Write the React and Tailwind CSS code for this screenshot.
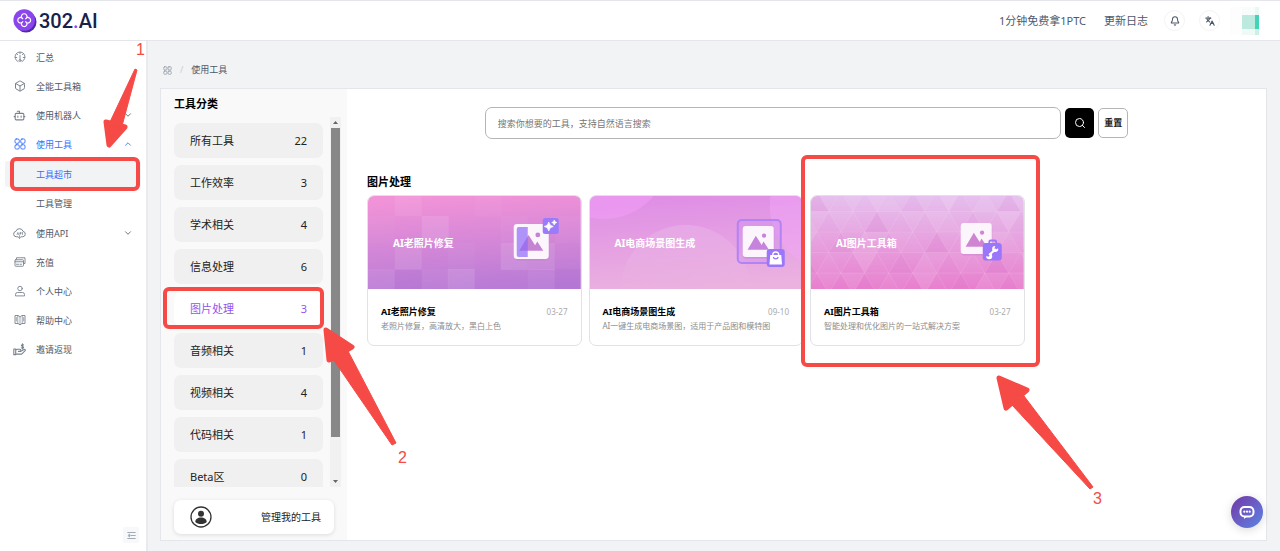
import React, { useState } from "react";
import { Bell, Bot, Box, ChevronDown, ChevronUp, Languages, Search } from "lucide-react";

const Svg = ({ className = "size-3", children }) => (
  <svg
    className={className}
    viewBox="0 0 24 24"
    fill="none"
    stroke="currentColor"
    strokeWidth="1.8"
    strokeLinecap="round"
    strokeLinejoin="round"
    aria-hidden="true"
  >
    {children}
  </svg>
);

const AppsIcon = ({ className }) => (
  <Svg className={className}>
    <rect x="2" y="2" width="8.5" height="8.5" rx="2.5" />
    <rect x="13.5" y="2" width="8.5" height="8.5" rx="2.5" />
    <rect x="2" y="13.5" width="8.5" height="8.5" rx="2.5" />
    <rect x="13.5" y="13.5" width="8.5" height="8.5" rx="2.5" />
  </Svg>
);

const GaugeIcon = () => (
  <Svg>
    <path d="M8 21.2a10 10 0 1 1 8 0" />
    <path d="M12 9v8M12 2.5v3M5.3 5.3l2 2M18.7 5.3l-2 2M2.5 13h3M18.5 13h3" />
    <circle cx="12" cy="19" r="2" />
  </Svg>
);

const CloudIcon = () => (
  <Svg className="size-[13px]">
    <path d="M9 18H6a5 5 0 0 1-.8-9.9 7 7 0 0 1 13.4 0A5 5 0 0 1 18 18h-3" />
    <path d="M12 16v5M10 19l2 2 2-2M7.5 14l1.5-4 1.5 4M13 14v-4h2v2h-2M17.5 10v4" strokeWidth="1.3" />
  </Svg>
);

const CardIcon = () => (
  <Svg>
    <path d="M5 6V3.500h17V15h-2.500" />
    <rect x="2" y="7.500" width="17" height="13" rx="1.500" />
    <path d="M2 11.500h17M5 16.500h4M12 16.500h3" />
  </Svg>
);

const UserIcon = () => (
  <Svg>
    <circle cx="12" cy="7" r="4.500" />
    <path d="M3 21v-2a4 4 0 0 1 4-4h10a4 4 0 0 1 4 4v2z" />
  </Svg>
);

const BookIcon = () => (
  <Svg>
    <path d="M12 5.500 8 3H2v16h6l4 2.500L16 19h6V3h-6z" />
    <path d="M12 5.500v16M7.500 3v16M16.500 3v16M4.700 7v7M19.300 7v7" strokeWidth="1.400" />
  </Svg>
);

const HandCoinIcon = () => (
  <Svg className="size-[13px]">
    <path
      d="M1.500 11H5v10.500H1.500zM5 13l3-1.500h4.500a1.800 1.800 0 0 1 0 4H10h4.500l5.500-3.600a1.600 1.600 0 0 1 2 2.600l-6 6H5"
      strokeWidth="2"
    />
    <path d="M19.500 3.500c-3-1.500-5 .8-3.200 2.200 1.200.9 3 .6 3.200 2.200.2 1.800-2.500 2.200-4.200 1M17.500 1.500v9.500" strokeWidth="2" />
  </Svg>
);

const menu = [
  { label: "汇总", icon: <GaugeIcon /> },
  { label: "全能工具箱", icon: <Box className="size-3" /> },
  { label: "使用机器人", icon: <Bot className="size-[13px]" />, arrow: "down" },
  {
    label: "使用工具",
    icon: <AppsIcon />,
    arrow: "up",
    active: true,
    children: ["工具超市", "工具管理"],
  },
  { label: "使用API", icon: <CloudIcon />, arrow: "down" },
  { label: "充值", icon: <CardIcon /> },
  { label: "个人中心", icon: <UserIcon /> },
  { label: "帮助中心", icon: <BookIcon /> },
  { label: "邀请返现", icon: <HandCoinIcon /> },
];

const categories = [
  { name: "所有工具", count: 22 },
  { name: "工作效率", count: 3 },
  { name: "学术相关", count: 4 },
  { name: "信息处理", count: 6 },
  { name: "图片处理", count: 3 },
  { name: "音频相关", count: 1 },
  { name: "视频相关", count: 4 },
  { name: "代码相关", count: 1 },
  { name: "Beta区", count: 0 },
];

const Logo = () => (
  <a href="#" className="flex items-center gap-[2px]" aria-label="302.AI">
    <svg className="size-6" viewBox="0 0 24 24">
      <circle cx="13" cy="13" r="10.500" fill="#4b2aa8" />
      <circle cx="11.200" cy="11" r="10.800" fill="#8b45ee" />
      <g fill="none" stroke="#fff" strokeWidth="1.200">
        <path d="M8.600 8.600a2.800 2.800 0 1 1 5.200 0 2.800 2.800 0 1 1 0 5.200 2.800 2.800 0 1 1-5.200 0 2.800 2.800 0 1 1 0-5.200z" />
        <path d="M8.600 8.600l1.500 1.500M13.800 8.600l-1.500 1.500M8.600 13.800l1.500-1.500M13.800 13.800l-1.500-1.500" />
      </g>
    </svg>
    <span className="font-[Roboto,sans-serif] text-[20px] leading-6 font-medium text-[#14224d]">
      302<span className="text-[#8b45ee]">.</span>AI
    </span>
  </a>
);

const Header = () => (
  <header className="flex h-[41px] items-center justify-between border-y border-[#e5e6eb] bg-white pr-5 pl-[13px]">
    <Logo />
    <div className="flex items-center text-[11px] leading-4 text-[#4e5969]">
      <a href="#">1分钟免费拿1PTC</a>
      <a href="#" className="ml-[18px]">更新日志</a>
      <button
        aria-label="通知"
        className="ml-4 flex size-[21px] items-center justify-center rounded-full border border-[#f2f3f5]"
      >
        <Bell className="size-[10px]" strokeWidth="2.500" />
      </button>
      <button
        aria-label="语言"
        className="ml-[14px] flex size-[21px] items-center justify-center rounded-full border border-[#f2f3f5]"
      >
        <Languages className="size-[10px]" strokeWidth="2.800" />
      </button>
      <button aria-label="账户" className="ml-[10px]">
        <svg className="h-7 w-[30px]" viewBox="0 0 30 28" shapeRendering="crispEdges">
          <rect width="30" height="28" fill="#fdfdfd" />
          <rect x="12" width="13" height="8" fill="#f8fcfb" />
          <rect x="25" width="4" height="8" fill="#eaf8f5" />
          <rect x="12" y="8" width="13" height="14" fill="#bdeadf" />
          <rect x="25" y="8" width="4" height="14" fill="#45d3b8" />
          <rect x="12" y="22" width="13" height="6" fill="#effaf7" />
          <rect x="25" y="22" width="4" height="6" fill="#cdf0e6" />
        </svg>
      </button>
    </div>
  </header>
);

const Sidebar = () => (
  <aside className="flex w-[148px] shrink-0 flex-col border-r-2 border-[#e8eaee] bg-white px-[5px] pt-[3px] pb-2 text-[9px] leading-[13px] text-[#4e5969]">
    <nav className="flex flex-col gap-[3px]">
      {menu.map((item) => (
        <React.Fragment key={item.label}>
          <a
            href="#"
            className={`flex h-[26px] items-center pr-2 pl-2 ${item.active ? "text-[#3370ff]" : ""}`}
          >
            <span className={`flex w-[13px] justify-center ${item.active ? "" : "text-[#78828f]"}`}>
              {item.icon}
            </span>
            <span className="ml-[10px] flex-1">{item.label}</span>
            {item.arrow === "down" && <ChevronDown className="size-[10px]" />}
            {item.arrow === "up" && <ChevronUp className="size-[10px]" />}
          </a>
          {item.children && (
            <div className="flex flex-col gap-[3px] py-px">
              {item.children.map((child, i) => (
                <a
                  key={child}
                  href="#"
                  className={`flex h-[26px] items-center rounded-xs pl-[31px] ${
                    i === 0 ? "bg-[#f2f3f5] text-[#3370ff]" : ""
                  }`}
                >
                  {child}
                </a>
              ))}
            </div>
          )}
        </React.Fragment>
      ))}
    </nav>
    <button
      aria-label="收起菜单"
      className="mt-auto mr-[2px] flex size-4 items-center justify-center self-end rounded-xs bg-[#f7f8fa] text-[#86909c]"
    >
      <Svg className="size-[9px]">
        <path d="M2 4h20M10 12h12M2 20h20M6 9l-3.500 3L6 15z" strokeWidth="2" />
      </Svg>
    </button>
  </aside>
);

const CategoryPanel = ({ selected, onSelect }) => (
  <section className="w-[186px] shrink-0 bg-[#f9f9f9] pt-[7px] pl-[13px]">
    <h2 className="text-[11px] leading-4 font-bold text-black">工具分类</h2>
    <div className="mt-[5px] flex h-[370px] justify-between pr-[6px]">
      <ul className="flex w-[149px] flex-col gap-[7px] overflow-hidden pt-[6px]">
        {categories.map(({ name, count }) => (
          <li key={name} className="shrink-0">
            <button
              onClick={() => onSelect(name)}
              className={`flex h-[35px] w-full items-center justify-between rounded-[7px] px-4 text-[11px] leading-4 ${
                selected === name ? "bg-white text-[#9254f0]" : "bg-[#f0f0f0] text-[#222]"
              }`}
            >
              <span>{name}</span>
              <span>{count}</span>
            </button>
          </li>
        ))}
      </ul>
      <div className="flex w-[11px] flex-col items-center bg-[#f1f1f1]">
        <svg className="size-[11px]" viewBox="0 0 11 11">
          <path d="M3 7h5L5.500 4z" fill="#666" />
        </svg>
        <div className="h-[309px] w-[9px] bg-[#888]" />
        <svg className="mt-auto size-[11px]" viewBox="0 0 11 11">
          <path d="M3 4h5L5.500 7z" fill="#666" />
        </svg>
      </div>
    </div>
    <button className="mt-[13px] flex h-[34px] w-40 items-center justify-between rounded-[7px] bg-white pr-[13px] pl-4 text-[10px] leading-4 text-[#222] shadow-[0_1px_4px_rgba(0,0,0,0.12)]">
      <svg className="size-[22px]" viewBox="0 0 22 22">
        <circle cx="11" cy="11" r="10" fill="none" stroke="#333" strokeWidth="1.300" />
        <circle cx="11" cy="7.800" r="3" fill="#333" />
        <path d="M5.300 16c0-3 2.500-4.500 5.700-4.500s5.700 1.500 5.700 4.500c-1.500 1.500-3.500 2-5.700 2s-4.200-.5-5.700-2z" fill="#333" />
      </svg>
      <span>管理我的工具</span>
    </button>
  </section>
);

const Picture = ({ x, y, size, color }) => (
  <g transform={`translate(${x} ${y}) scale(${size / 32})`}>
    <rect x="0.500" y="1.500" width="32" height="32" rx="3" fill={color} opacity="0.6" />
    <rect width="32" height="32" rx="3" fill="#fcf5fc" />
    <path d="M5 24.500 13.500 10l6 9.500 2-3.500 5.500 8.500z" fill={color} />
    <circle cx="22" cy="10" r="2.200" fill={color} />
  </g>
);

const tiles = [
  [27, -7, 0.07], [54, 20, 0.1], [107, -7, 0.03], [27, 47, 0.09], [133, 20, 0.03],
  [133, 47, 0.11], [160, 47, 0.09], [0, 73, 0.06], [80, 73, 0.11], [54, 73, 0.03],
  [187, 20, 0.03], [160, 73, 0.05], [0, 20, 0.02], [80, 47, 0.03],
];

const RepairBanner = () => (
  <>
    <defs>
      <linearGradient id="repair" x1="0.350" y1="0" x2="0.500" y2="1">
        <stop offset="0" stopColor="#f293d8" />
        <stop offset="1" stopColor="#b87bd6" />
      </linearGradient>
    </defs>
    <rect width="213" height="93" fill="url(#repair)" />
    {tiles.map(([x, y, o]) => (
      <rect key={`${x}-${y}`} x={x} y={y} width="27" height="27" fill="#fff" opacity={o} />
    ))}
    <rect x="27" y="73" width="27" height="20" fill="#9e5fc8" opacity="0.12" />
    <rect x="187" y="73" width="26" height="20" fill="#9e5fc8" opacity="0.12" />
    <Picture x={146} y={28} size={35} color="#c583d4" />
    <path d="M151 31h9v30h-9a2 2 0 0 1-2-2V33a2 2 0 0 1 2-2z" fill="#8f69f7" opacity="0.7" />
    <rect x="175" y="22" width="16" height="16" rx="2.500" fill="#9c7bfb" />
    <path
      d="M181 26q.6 3.900 4.500 4.500-3.900.6-4.500 4.500-.6-3.900-4.500-4.500 3.900-.6 4.500-4.500zM186.500 24q.3 2.200 2.500 2.500-2.200.3-2.500 2.500-.3-2.200-2.500-2.500 2.200-.3 2.500-2.500z"
      fill="#fff"
      stroke="#fff"
      strokeWidth="0.700"
    />
  </>
);

const ShopBanner = () => (
  <>
    <defs>
      <linearGradient id="shop" x1="0.400" y1="0" x2="0.550" y2="1">
        <stop offset="0" stopColor="#df8ee5" />
        <stop offset="1" stopColor="#ebb2df" />
      </linearGradient>
      <linearGradient id="bubble" x1="0" y1="0" x2="0" y2="1">
        <stop offset="0" stopColor="#fff" stopOpacity="0.140" />
        <stop offset="0.500" stopColor="#fff" stopOpacity="0" />
      </linearGradient>
    </defs>
    <rect width="213" height="93" fill="url(#shop)" />
    <circle cx="14" cy="-43" r="66" fill="#f3a0fa" opacity="0.500" />
    <circle cx="245" cy="10" r="65" fill="#f5a8fa" opacity="0.450" />
    <circle cx="96" cy="94" r="65" fill="url(#bubble)" />
    <rect x="148" y="24" width="43" height="43" rx="4" fill="#c98ef0" fillOpacity="0.350" stroke="#b183f5" strokeWidth="2" />
    <Picture x={153} y={30} size={31} color="#c583dc" />
    <rect x="177" y="53" width="18" height="18" rx="3" fill="#9a76fa" />
    <path d="M180.500 59h11l.8 9.500h-12.600z" fill="#fff" />
    <path d="M183 59a3 3 0 0 1 6 0" fill="none" stroke="#fff" strokeWidth="1.300" />
    <path d="M183.500 61a2.600 2.600 0 0 0 5 0" fill="none" stroke="#9a76fa" strokeWidth="1.200" />
  </>
);

// rows of alternating up / down triangles, shaded by a fixed sequence
const shades = [0, 0.07, 0.02, 0.12, 0, 0.05, 0.01, 0.09, 0.03, 0, 0.06];
const triangles = [];
for (let row = 0; row < 5; row++) {
  for (let col = -1; col < 19; col++) {
    const x = col * 12 - 6;
    const y = row * 20.5 - 5;
    const up = (row + col) % 2 === 0;
    triangles.push({
      d: up ? `M${x} ${y + 20.5}h24l-12-20.5z` : `M${x} ${y}h24l-12 20.5z`,
      fill: (row * 3 + col) % 4 === 0 ? "#c94fbb" : "#fff",
      opacity: shades[(row * 7 + (col + 1) * 3) % shades.length],
    });
  }
}

const ToolboxBanner = () => (
  <>
    <defs>
      <linearGradient id="toolbox" x1="0" y1="0" x2="0" y2="1">
        <stop offset="0" stopColor="#e6c0ee" />
        <stop offset="1" stopColor="#e87fce" />
      </linearGradient>
    </defs>
    <rect width="213" height="93" fill="url(#toolbox)" />
    {triangles.map((t) => (
      <path key={t.d} d={t.d} fill={t.fill} fillOpacity={t.opacity} stroke="#fff" strokeOpacity="0.100" strokeWidth="0.600" />
    ))}
    <Picture x={150} y={27} size={31} color="#cf86d2" />
    <path d="M178.500 48v-2a1.500 1.500 0 0 1 1.500-1.500h4a1.500 1.500 0 0 1 1.500 1.500v2" fill="none" stroke="#9a76fa" strokeWidth="1.800" />
    <rect x="172" y="47" width="19" height="17.500" rx="3" fill="#9a76fa" />
    <path d="m178.500 59 6.500-6" stroke="#fff" strokeWidth="2.300" />
    <path d="M187.300 52.200a3 3 0 1 1-2.800-2.200l-1 2.800 1.500 1z" fill="#fff" />
    <path d="M175.500 60a3 3 0 1 0 2.800-2.700l.8 2-1.400 1.500z" fill="#fff" />
  </>
);

const tools = [
  { title: "AI老照片修复", date: "03-27", desc: "老照片修复，高清放大，黑白上色", Banner: RepairBanner },
  { title: "AI电商场景图生成", date: "09-10", desc: "AI一键生成电商场景图，适用于产品图和模特图", Banner: ShopBanner },
  { title: "AI图片工具箱", date: "03-27", desc: "智能处理和优化图片的一站式解决方案", Banner: ToolboxBanner },
];

const ToolCard = ({ title, date, desc, Banner }) => (
  <article className="overflow-hidden rounded-[7px] border border-[#e2e2e6] bg-white">
    <div className="relative flex h-[93px] items-center pl-[25px]">
      <svg
        className="absolute inset-0 h-full w-full"
        viewBox="0 0 213 93"
        preserveAspectRatio="xMidYMid slice"
        aria-hidden="true"
      >
        <Banner />
      </svg>
      <span className="relative text-[10px] leading-4 font-bold text-white">{title}</span>
    </div>
    <div className="px-[13px] pt-[15px] pb-3">
      <div className="flex items-center justify-between">
        <h3 className="text-[9px] leading-[15px] font-bold text-black">{title}</h3>
        <time className="text-[8px] leading-[15px] text-[#aaa]">{date}</time>
      </div>
      <p className="text-[8px] leading-[14px] text-[#8c8c8c]">{desc}</p>
    </div>
  </article>
);

const SearchBar = () => (
  <form className="mx-auto flex w-[70%] items-center gap-1" onSubmit={(e) => e.preventDefault()}>
    <input
      type="text"
      aria-label="搜索工具"
      placeholder="搜索你想要的工具，支持自然语言搜索"
      className="h-8 min-w-0 flex-1 rounded-[7px] border border-[#b5b5b5] bg-white px-3 text-[9px] leading-4 outline-none placeholder:text-[#757575]"
    />
    <button
      type="submit"
      aria-label="搜索"
      className="flex h-[30px] w-[29px] items-center justify-center rounded-[5px] bg-black text-white"
    >
      <Search className="size-3" />
    </button>
    <button
      type="reset"
      className="h-[30px] w-[30px] rounded-[5px] border border-[#b5b5b5] bg-white text-[9px] leading-4 font-bold text-[#222]"
    >
      重置
    </button>
  </form>
);

const arrows = [
  {
    head: "106,122 125,127 109,145",
    tail: "135,69 137,70 122,126 110,122",
  },
  {
    head: "326,330 352,347 329,360",
    tail: "396,443 392,445 333,359 348,351",
  },
  {
    head: "999,378 1027,390 1006,408",
    tail: "1093,487 1090,489 1012,405 1024,396",
  },
];

const Annotations = () => (
  <div className="pointer-events-none absolute inset-0 font-['Liberation_Sans',sans-serif] text-[16px] leading-4 text-[#f54a45]">
    <div className="absolute top-[157px] left-[10px] h-[34px] w-[130px] rounded-[6px] border-4 border-[#f54a45]" />
    <div className="absolute top-[287px] left-[163px] h-[42px] w-[161px] rounded-[6px] border-4 border-[#f54a45]" />
    <div className="absolute top-[155px] left-[801px] h-[212px] w-[239px] rounded-[6px] border-4 border-[#f54a45]" />
    <svg className="absolute top-0 left-0 h-[551px] w-[1280px]" viewBox="0 0 1280 551" fill="#f54a45" stroke="#f54a45" strokeLinejoin="round">
      {arrows.map((a) => (
        <g key={a.head}>
          <polygon points={a.head} strokeWidth="5" />
          <polygon points={a.tail} strokeWidth="1" />
        </g>
      ))}
    </svg>
    <span className="absolute top-[42px] left-[136px]">1</span>
    <span className="absolute top-[450px] left-[398px]">2</span>
    <span className="absolute top-[491px] left-[1093px]">3</span>
  </div>
);

const App = () => {
  const [selected, setSelected] = useState("图片处理");

  return (
    <div
      lang="zh-CN"
      className="relative flex min-h-screen flex-col bg-[#f2f3f5] font-['Noto_Sans','Noto_Sans_CJK_SC',sans-serif]"
    >
      <Header />
      <div className="flex flex-1">
        <Sidebar />
        <main className="flex min-w-0 flex-1 flex-col pt-[21px] pr-[13px] pb-[10px] pl-3">
          <div className="flex h-4 items-center text-[9px] leading-4 text-[#4e5969]">
            <span className="ml-[3px] text-[#86909c]">
              <AppsIcon className="size-[9px]" />
            </span>
            <span className="mx-2 text-[#c9cdd4]">/</span>
            <span>使用工具</span>
          </div>
          <div className="mt-[10px] flex flex-1 border border-[#e5e6eb] bg-white">
            <CategoryPanel selected={selected} onSelect={setSelected} />
            <section className="min-w-0 flex-1 px-5 pt-[18px]">
              <div className="-mx-5">
                <SearchBar />
              </div>
              <h2 className="mt-[35px] text-[11px] leading-4 font-bold text-black">{selected}</h2>
              <div className="mt-[5px] grid grid-cols-4 gap-[7px]">
                {tools.map((tool) => (
                  <ToolCard key={tool.title} {...tool} />
                ))}
              </div>
            </section>
          </div>
        </main>
      </div>
      <button
        aria-label="在线客服"
        className="absolute right-[17px] bottom-[23px] flex size-8 items-center justify-center rounded-full bg-linear-to-br from-[#6f35a5] to-[#5584e6] shadow-[0_2px_10px_rgba(0,0,0,0.15)]"
      >
        <svg className="size-4" viewBox="0 0 16 16">
          <rect x="1.500" y="3" width="13" height="9.500" rx="4" fill="none" stroke="#fff" strokeWidth="2" />
          <path d="M5 12.500v2.500l3-2.500z" fill="#fff" />
          <circle cx="5.300" cy="7.700" r="1.100" fill="#fff" />
          <circle cx="8" cy="7.700" r="1.100" fill="#fff" />
          <circle cx="10.700" cy="7.700" r="1.100" fill="#fff" />
        </svg>
      </button>
      <Annotations />
    </div>
  );
};

export default App;
